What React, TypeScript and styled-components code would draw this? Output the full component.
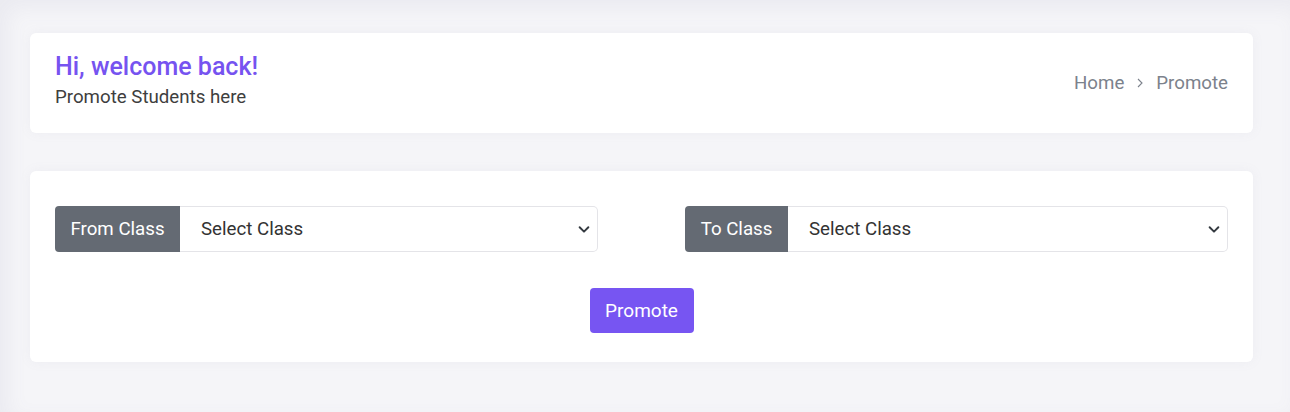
import React from "react";
import styled, { createGlobalStyle } from "styled-components";

const Global = createGlobalStyle`
  html, body { margin: 0; padding: 0; }
  body {
    background: #f5f5f8;
    font-family: Roboto, "Noto Sans", Arial, sans-serif;
    color: #333;
  }
`;

const Page = styled.div`
  width: 1290px;
  height: 412px;
  box-sizing: border-box;
  padding: 33px 37px 0 30px;
  display: flex;
  flex-direction: column;
  gap: 38px;
  background: #f5f5f8;
  box-shadow: inset 8px 8px 20px rgba(120, 110, 150, 0.08);
`;

const Card = styled.div<{ $pad: string }>`
  background: #fff;
  border-radius: 6px;
  padding: ${(p) => p.$pad};
  box-shadow: 0 0 12px rgba(140, 140, 170, 0.08);
`;

const HeaderRow = styled.div`
  display: flex;
  align-items: center;
  justify-content: space-between;
`;

const Title = styled.h4`
  margin: 0;
  font-size: 25px;
  font-weight: 500;
  color: #7653f0;
  line-height: 29px;
`;

const Sub = styled.p`
  margin: 5px 0 0;
  font-size: 18.7px;
  color: #3e3e3e;
  line-height: 23px;
`;

const Crumbs = styled.div`
  display: flex;
  align-items: center;
  gap: 9px;
  margin-top: 5px;
  font-size: 18.7px;
  color: #7c828c;
`;

const Row = styled.div`
  display: grid;
  grid-template-columns: 543px 543px;
  column-gap: 87px;
`;

const Group = styled.div`
  display: flex;
  height: 46px;
`;

const Label = styled.span<{ $w: number }>`
  width: ${(p) => p.$w}px;
  flex: none;
  background: #646a73;
  color: #fff;
  font-size: 18.7px;
  display: flex;
  align-items: center;
  justify-content: center;
  padding-bottom: 1px;
  box-sizing: border-box;
  border-radius: 4px 0 0 4px;
`;

const SelectBox = styled.div`
  flex: 1;
  position: relative;
  border: 1px solid #e4e4e8;
  border-left: none;
  border-radius: 0 5px 5px 0;
  display: flex;
  align-items: center;
  padding-left: 21px;
  font-size: 18.7px;
  color: #333;
`;

const Chevron = styled.svg`
  position: absolute;
  right: 6px;
  top: 50%;
  transform: translateY(-50%);
`;

const Center = styled.div`
  display: flex;
  justify-content: center;
  margin-top: 36px;
`;

const Button = styled.button`
  width: 104px;
  height: 45px;
  border: none;
  border-radius: 4px;
  background: #7755f2;
  color: #fff;
  font-family: Roboto, sans-serif;
  font-size: 19px;
  padding: 0;
`;

const Select = ({ label, w }: { label: string; w: number }) => (
  <Group>
    <Label $w={w}>{label}</Label>
    <SelectBox>
      Select Class
      <Chevron width="14" height="14" viewBox="0 0 16 16">
        <path d="M3 6l5 5 5-5" fill="none" stroke="#343a40" strokeWidth="2.2" strokeLinecap="round" strokeLinejoin="round" />
      </Chevron>
    </SelectBox>
  </Group>
);

export default function App() {
  return (
    <>
      <Global />
      <Page>
        <Card $pad="19px 25px 24px">
          <HeaderRow>
            <div>
              <Title>Hi, welcome back!</Title>
              <Sub>Promote Students here</Sub>
            </div>
            <Crumbs>
              <span>Home</span>
              <svg width="14" height="14" viewBox="0 0 14 14">
                <path d="M5 3l4 4-4 4" fill="none" stroke="#7c828c" strokeWidth="1.1" />
              </svg>
              <span>Promote</span>
            </Crumbs>
          </HeaderRow>
        </Card>
        <Card $pad="35px 25px 29px">
          <Row>
            <Select label="From Class" w={125} />
            <Select label="To Class" w={103} />
          </Row>
          <Center>
            <Button>Promote</Button>
          </Center>
        </Card>
      </Page>
    </>
  );
}
